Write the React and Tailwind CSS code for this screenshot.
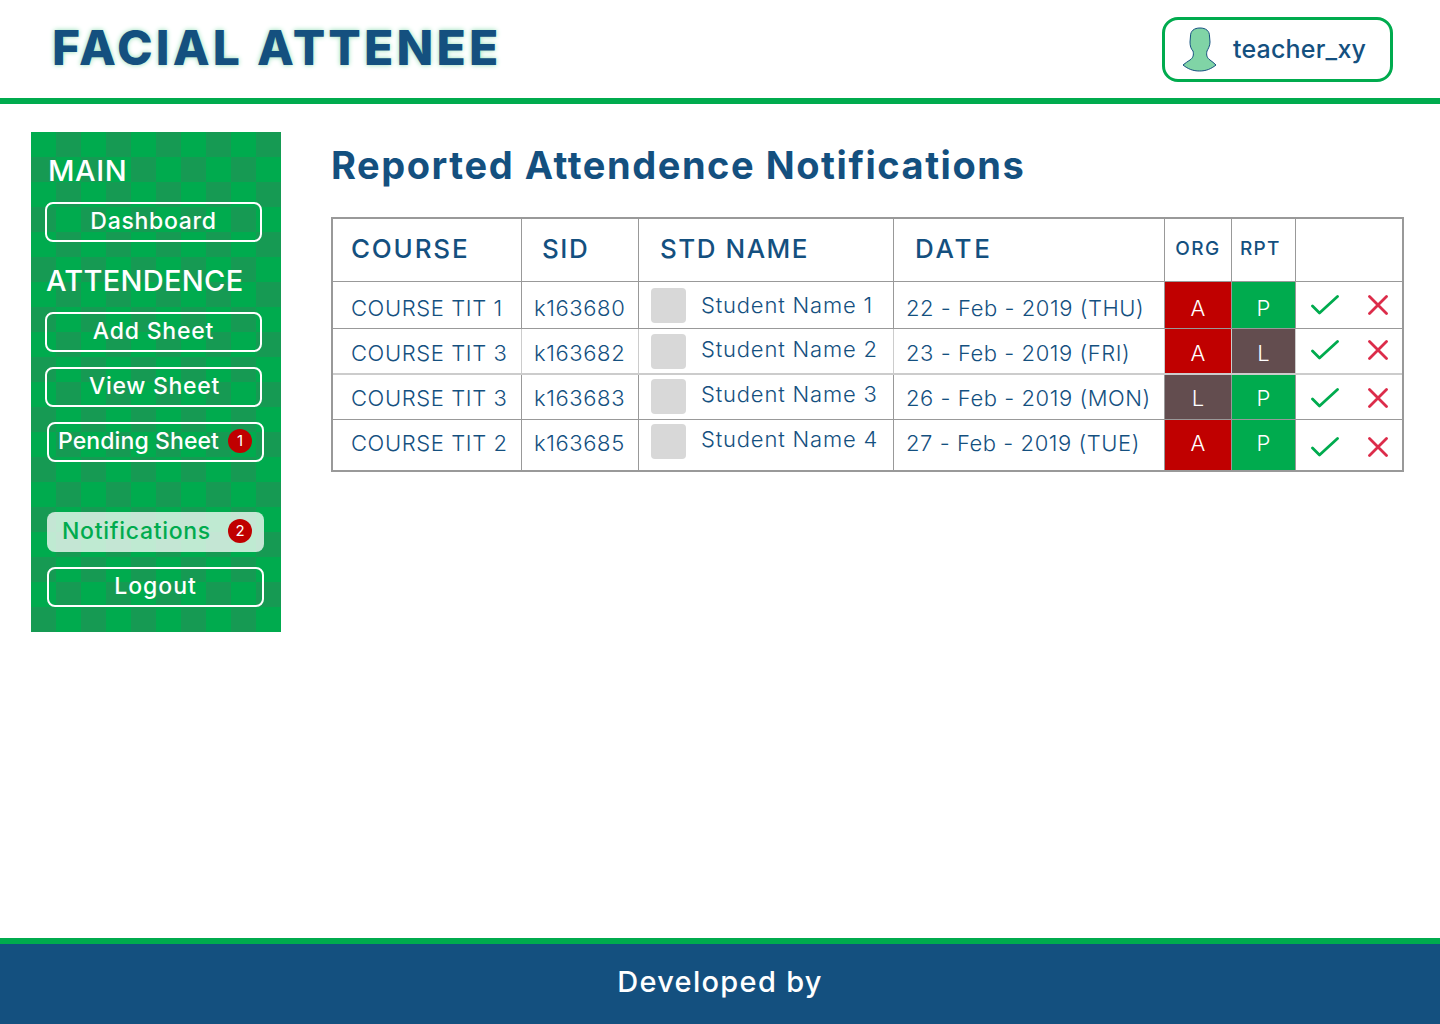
import React from 'react';

const navy = 'text-[#14507f]';

const rows = [
  { course: 'COURSE TIT 1', sid: 'k163680', name: 'Student Name 1', date: '22 - Feb - 2019 (THU)', org: 'A', rpt: 'P', rowClass: 'h-[47px]', line: 'border-b border-[#999]', text: 'pt-[10px]', avatar: 'pt-[6px]', nameGap: 'mb-[1px]', icons: 'pt-[13px]' },
  { course: 'COURSE TIT 3', sid: 'k163682', name: 'Student Name 2', date: '23 - Feb - 2019 (FRI)', org: 'A', rpt: 'L', rowClass: 'h-[46px]', line: 'border-b-2 border-[#ccc]', text: 'pt-[8px]', avatar: 'pt-[4px]', nameGap: 'mb-[3px]', icons: 'pt-[11px]' },
  { course: 'COURSE TIT 3', sid: 'k163683', name: 'Student Name 3', date: '26 - Feb - 2019 (MON)', org: 'L', rpt: 'P', rowClass: 'h-[45px]', line: 'border-b border-[#999]', text: 'pt-[7px]', avatar: 'pt-[3px]', nameGap: 'mb-[3px]', icons: 'pt-[13px]' },
  { course: 'COURSE TIT 2', sid: 'k163685', name: 'Student Name 4', date: '27 - Feb - 2019 (TUE)', org: 'A', rpt: 'P', rowClass: 'h-[50px]', line: '', text: 'pt-[7px]', avatar: 'pt-[3px]', nameGap: 'mb-[3px]', icons: 'pt-[17px]' },
];

const statusBg = { A: 'bg-[#c00000]', P: 'bg-[#00ab4e]', L: 'bg-[#634d4f]' };

const UserIcon = () => (
  <svg width="35" height="45" viewBox="0 0 35 45" fill="none">
    <path
      d="M18 1C24 1 27.5 4 27.5 9L28 15C28 19 26 22 25 24C24 28 25 31 28 33C30 34.5 32 36 34 38C29 42 24 44 17.5 44C11 44 6 42 1 38C3 36 6 34.5 8 33C11 31 12 28 11 24C9 22 8 19 8 15L8.5 9C8.5 4 12 1 18 1Z"
      fill="#80d4a6"
      stroke="#14507f"
      strokeWidth="1"
    />
  </svg>
);

const Check = () => (
  <svg width="28" height="20" viewBox="0 0 28 20" fill="none">
    <path d="M1.5 11L8.5 18L26.5 1.5" stroke="#00ab4e" strokeWidth="2.8" strokeLinecap="round" strokeLinejoin="round" />
  </svg>
);

const Cross = () => (
  <svg width="20" height="20" viewBox="0 0 20 20" fill="none">
    <path d="M1.5 1.5L18.5 18.5M18.5 1.5L1.5 18.5" stroke="#dc2c4a" strokeWidth="2.8" strokeLinecap="round" />
  </svg>
);

const Badge = ({ children }) => (
  <span className="flex h-6 w-6 items-center justify-center rounded-full bg-[#c00000] text-[15px] font-normal tracking-normal text-white">
    {children}
  </span>
);

const SideButton = ({ children, className }) => (
  <div className={`flex h-10 w-[217px] items-center justify-center rounded-lg border-2 border-white pb-[2px] text-[23px] font-medium text-white ${className}`}>
    {children}
  </div>
);

const Sidebar = () => (
  <aside className="flex h-[500px] w-[250px] flex-col bg-[image:repeating-conic-gradient(#169a53_0_25%,#00ab4e_0_50%)] bg-[length:50px_50px] pl-[14px] pt-[24px]">
    <h2 className="ml-[3px] flex h-[30px] items-center text-[29px] font-medium tracking-[0.6px] text-white">MAIN</h2>
    <SideButton className="mt-[16px] tracking-[0.7px]">Dashboard</SideButton>
    <h2 className="mt-[23px] ml-[1px] flex h-[32px] items-center text-[29px] font-medium tracking-[0.3px] text-white">ATTENDENCE</h2>
    <SideButton className="mt-[15px] tracking-[0.8px]">Add Sheet</SideButton>
    <SideButton className="mt-[15px] pl-[2px] tracking-[0.7px]">View Sheet</SideButton>
    <SideButton className="mt-[15px] ml-[2px] !justify-between pl-[9px] pr-[10px] tracking-[0.1px]">
      Pending Sheet
      <Badge>1</Badge>
    </SideButton>
    <div className="mt-[50px] ml-[2px] flex h-10 w-[217px] items-center justify-between rounded-lg bg-white/75 pb-[2px] pl-[15px] pr-[12px] text-[23px] font-medium tracking-[0.7px] text-[#00ab4e]">
      Notifications
      <Badge>2</Badge>
    </div>
    <SideButton className="mt-[15px] ml-[2px] tracking-[1px]">Logout</SideButton>
  </aside>
);

const AttendanceTable = () => (
  <div className="mt-[32px] w-[1073px] border-2 border-[#999]">
    <table className={`w-[1069px] table-fixed border-separate border-spacing-0 ${navy}`}>
      <colgroup>
        <col className="w-[189px]" />
        <col className="w-[117px]" />
        <col className="w-[255px]" />
        <col className="w-[271px]" />
        <col className="w-[67px]" />
        <col className="w-[64px]" />
        <col className="w-[106px]" />
      </colgroup>
      <thead>
        <tr className="h-[63px] text-left text-[26px] tracking-[1.5px]">
          <th className="border-r border-b border-[#999] pb-[4px] pl-[18px] font-medium tracking-[1.8px]">COURSE</th>
          <th className="border-r border-b border-[#999] pb-[4px] pl-[20px] font-medium">SID</th>
          <th className="border-r border-b border-[#999] pb-[4px] pl-[21px] font-medium">STD NAME</th>
          <th className="border-r border-b border-[#999] pb-[4px] pl-[21px] font-medium tracking-[2.8px]">DATE</th>
          <th className="border-r border-b border-[#999] pb-[2px] text-center text-[19px] font-medium tracking-[1.4px]">ORG</th>
          <th className="border-r border-b border-[#999] pb-[2px] pl-[8px] text-[19px] font-medium tracking-[1.3px]">RPT</th>
          <th className="border-b border-[#999]"></th>
        </tr>
      </thead>
      <tbody className="text-[22px] font-light">
        {rows.map((r) => (
          <tr key={r.sid} className={r.rowClass}>
            <td className={`border-r border-[#999] pl-[18px] align-top tracking-[0.6px] whitespace-nowrap ${r.line} ${r.text}`}>{r.course}</td>
            <td className={`border-r border-[#999] pl-[12px] align-top tracking-[0.6px] ${r.line} ${r.text}`}>{r.sid}</td>
            <td className={`border-r border-[#999] pl-[12px] align-top ${r.line} ${r.avatar}`}>
              <div className="flex items-center">
                <div className="h-[35px] w-[35px] rounded bg-[#d8d8d8]"></div>
                <span className={`ml-[15px] tracking-[0.8px] whitespace-nowrap ${r.nameGap}`}>{r.name}</span>
              </div>
            </td>
            <td className={`border-r border-[#999] pl-[12px] align-top tracking-[0.55px] whitespace-nowrap ${r.line} ${r.text}`}>{r.date}</td>
            <td className={`border-r border-[#999] text-center align-top text-white ${statusBg[r.org]} ${r.line} ${r.text}`}>{r.org}</td>
            <td className={`border-r border-[#999] text-center align-top text-white ${statusBg[r.rpt]} ${r.line} ${r.text}`}>{r.rpt}</td>
            <td className={`align-top ${r.line} ${r.icons}`}>
              <div className="flex items-center justify-between pl-[15px] pr-[14px]">
                <Check />
                <Cross />
              </div>
            </td>
          </tr>
        ))}
      </tbody>
    </table>
  </div>
);

export default function App() {
  return (
    <div className="flex h-screen flex-col bg-white font-[Inter,sans-serif]">
      <header className="flex h-[104px] shrink-0 items-center justify-between border-b-[6px] border-[#00ab4e] pl-[52px] pr-[47px]">
        <h1 className={`pb-[2px] text-[48px] font-extrabold leading-none tracking-[3.2px] [text-shadow:0_0_5px_#8fdcb4] ${navy}`}>FACIAL ATTENEE</h1>
        <div className="mt-[1px] flex h-[65px] w-[231px] items-center rounded-2xl border-[3px] border-[#00ab4e] pl-[17px]">
          <UserIcon />
          <span className={`ml-[16px] pt-[1px] text-[25px] font-medium tracking-[0.2px] ${navy}`}>teacher_xy</span>
        </div>
      </header>

      <div className="flex flex-1 pt-[28px] pl-[31px]">
        <Sidebar />
        <main className="pl-[50px]">
          <h1 className={`mt-[13px] flex h-[40px] items-center text-[38px] font-bold tracking-[1.55px] whitespace-nowrap ${navy}`}>Reported Attendence Notifications</h1>
          <AttendanceTable />
        </main>
      </div>

      <footer className="flex h-[86px] shrink-0 items-center justify-center border-t-[6px] border-[#00ab4e] bg-[#14507f] pb-[4px] text-[29px] font-medium tracking-[1.3px] text-white">
        Developed by
      </footer>
    </div>
  );
}
